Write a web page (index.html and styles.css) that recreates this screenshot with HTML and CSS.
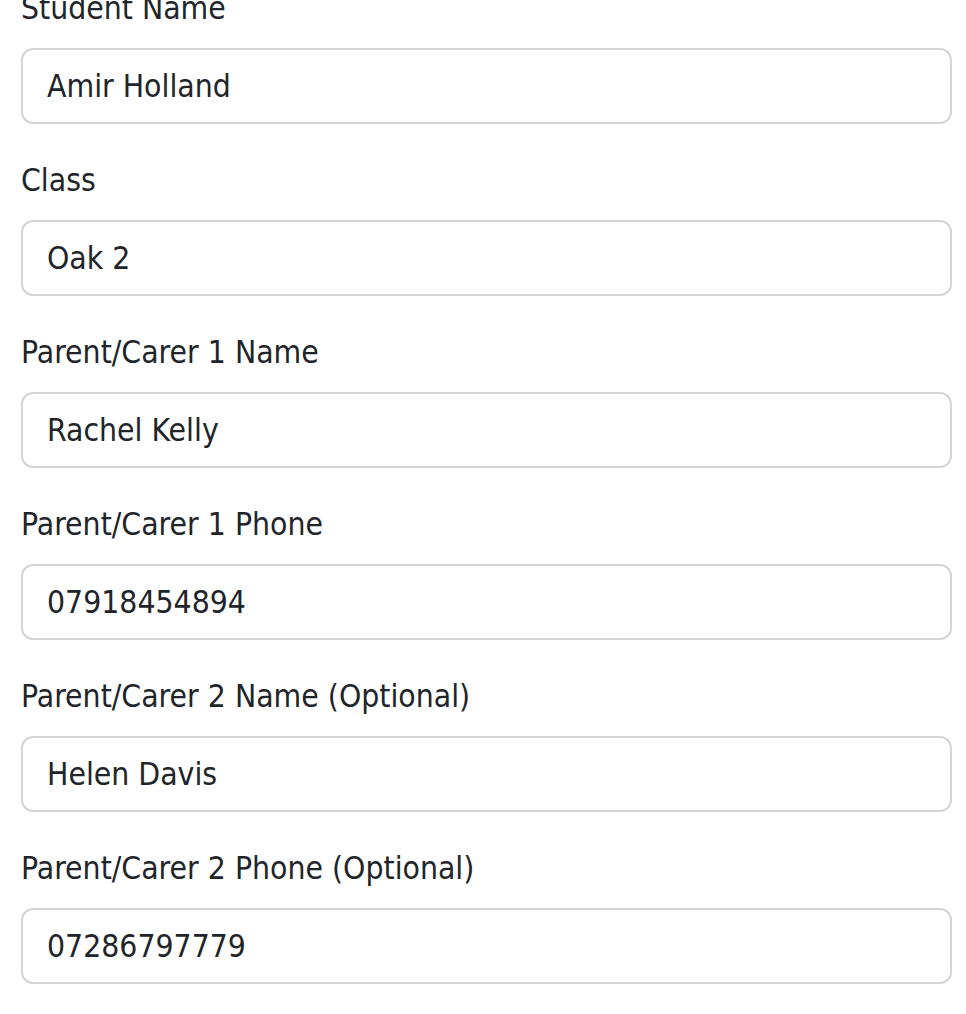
FILE: index.html
```html
<!DOCTYPE html>
<html lang="en">
<head>
<meta charset="utf-8">
<title>Student form</title>
<link rel="stylesheet" href="styles.css">
</head>
<body>
<form class="form">
  <div class="field">
    <label class="label" for="f1">Student Name</label>
    <input class="input" id="f1" type="text" value="Amir Holland">
  </div>
  <div class="field">
    <label class="label" for="f2">Class</label>
    <input class="input" id="f2" type="text" value="Oak 2">
  </div>
  <div class="field">
    <label class="label" for="f3">Parent/Carer 1 Name</label>
    <input class="input" id="f3" type="text" value="Rachel Kelly">
  </div>
  <div class="field">
    <label class="label" for="f4">Parent/Carer 1 Phone</label>
    <input class="input" id="f4" type="text" value="07918454894">
  </div>
  <div class="field">
    <label class="label" for="f5">Parent/Carer 2 Name (Optional)</label>
    <input class="input" id="f5" type="text" value="Helen Davis">
  </div>
  <div class="field">
    <label class="label" for="f6">Parent/Carer 2 Phone (Optional)</label>
    <input class="input" id="f6" type="text" value="07286797779">
  </div>
</form>
</body>
</html>
```
FILE: styles.css
```css
html, body {
  margin: 0;
  padding: 0;
  background: #ffffff;
}
body {
  font-family: "DejaVu Sans Condensed", "DejaVu Sans", sans-serif;
  font-stretch: condensed;
  font-size: 31.6px;
  line-height: 1.5;
  color: #212529;
}
.form {
  display: flex;
  flex-direction: column;
  gap: 32px;
  margin-top: -16px;
  padding: 0 14px 0 21px;
}
.field {
  display: flex;
  flex-direction: column;
}
.label {
  display: block;
  margin-bottom: 16px;
  line-height: 48px;
}
.input {
  box-sizing: border-box;
  width: 100%;
  height: 76px;
  margin: 0;
  padding: 12px 24px;
  border: 2px solid #d1d5da;
  border-radius: 12px;
  background: #fff;
  font: inherit;
  color: #212529;
  outline: none;
}
```
